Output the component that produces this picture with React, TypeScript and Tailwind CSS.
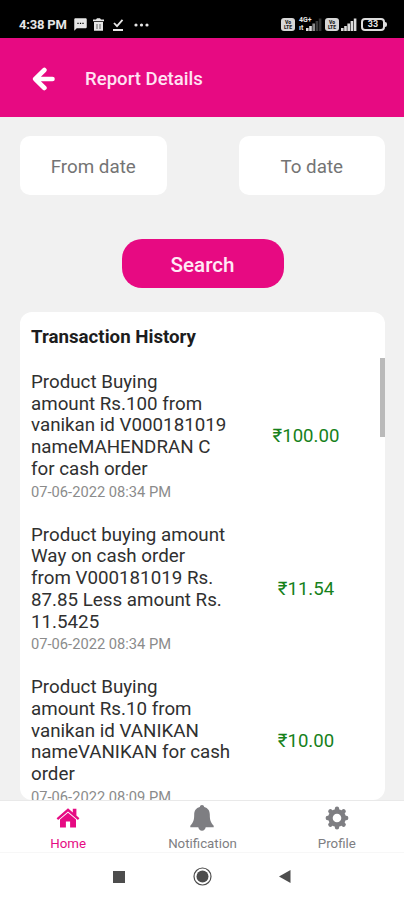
import { ReactNode } from 'react';
import { MdSms } from 'react-icons/md';

interface Transaction {
  lines: string[];
  date: string;
  amount: string;
}

const transactions: Transaction[] = [
  {
    lines: ['Product Buying', 'amount Rs.100 from', 'vanikan id V000181019', 'nameMAHENDRAN C', 'for cash order'],
    date: '07-06-2022 08:34 PM',
    amount: '₹100.00',
  },
  {
    lines: ['Product buying amount', 'Way on cash order', 'from V000181019 Rs.', '87.85 Less amount Rs.', '11.5425'],
    date: '07-06-2022 08:34 PM',
    amount: '₹11.54',
  },
  {
    lines: ['Product Buying', 'amount Rs.10 from', 'vanikan id VANIKAN', 'nameVANIKAN for cash', 'order'],
    date: '07-06-2022 08:09 PM',
    amount: '₹10.00',
  },
];

function BackIcon() {
  return (
    <svg
      className="mt-0.5 h-6 w-6"
      viewBox="0 0 24 24"
      fill="none"
      stroke="white"
      strokeWidth="4.6"
      strokeLinejoin="round"
      strokeLinecap="round"
    >
      <path d="M12.4 3L3.2 12l9.200 9M4 12h16.500" />
    </svg>
  );
}

function HomeIcon() {
  return (
    <svg className="h-5 w-6" viewBox="0 0 24 20" fill="currentColor">
      <path d="M12 .3L.6 10.200l1.500 1.700L12 3.400l9.900 8.500 1.500-1.700-3-2.600V.8h-3.600v3.700z" />
      <path d="M12 4.700l-8 6.900V19.500h5.900v-6h4.200v6H20v-7.900z" />
    </svg>
  );
}

function BellIcon() {
  return (
    <svg className="h-[26px] w-6" viewBox="0 0 24 26" fill="currentColor">
      <path d="M12 0c1.300 0 2 .8 2.200 2 3.900 1 5.600 4 5.600 7.500 0 5.300.7 7.800 3.900 11.200v1.500H.3v-1.500c3.200-3.400 3.900-5.900 3.900-11.200C4.200 6 5.900 3 9.800 2 10 .8 10.700 0 12 0z" />
      <path d="M8.200 21.500h7.600c-.2 2.600-1.700 4.200-3.800 4.200s-3.600-1.600-3.800-4.200z" />
    </svg>
  );
}

function GearIcon() {
  return (
    <svg className="h-6 w-6" viewBox="0 0 24 24" fill="none" stroke="currentColor">
      <circle cx="12" cy="12" r="6.600" strokeWidth="4.600" />
      <g strokeWidth="4.400" strokeLinecap="round">
        <path d="M12 2.800v2M12 19.200v2M2.800 12h2M19.200 12h2" />
        <path d="M5.400 5.400l1.500 1.500M17.100 17.100l1.500 1.500M5.400 18.600l1.500-1.500M17.100 6.900l1.500-1.500" />
      </g>
    </svg>
  );
}

function VolteBadge() {
  return (
    <div className="flex h-[13px] w-[14px] flex-col items-center justify-center rounded-[3px] bg-[#d6d6d6] text-[5px] leading-[5px] font-black text-[#222]">
      <span>Vo</span>
      <span>LTE</span>
    </div>
  );
}

function SignalBars({ weak = false }: { weak?: boolean }) {
  return (
    <svg className="h-[13px] w-4" viewBox="0 0 16 13" fill="#dcdcdc">
      <rect x="0" y="10" width="2.6" height="3" />
      <rect x="3.2" y="8" width="2.6" height="5" />
      <rect x="6.4" y="5.5" width="2.6" height="7.5" fill={weak ? '#8a8a8a' : undefined} />
      <rect x="9.6" y="3" width="2.6" height="10" fill={weak ? '#3a3a3a' : undefined} />
      <rect x="12.8" y="0.5" width="2.6" height="12.5" fill={weak ? '#333' : undefined} />
    </svg>
  );
}

function StatusBar() {
  return (
    <div className="flex h-[38px] shrink-0 items-start bg-black pt-[17px] pr-[17px] pl-[19px] text-[#e6e6e6]">
      <span className="w-[49px] text-[13px] leading-4 font-bold tracking-[-0.2px] whitespace-nowrap">4:38 PM</span>
      <MdSms className="ml-[5px] h-[15px] w-[15px]" />
      <svg className="mt-px ml-[5px] h-[13px] w-[11px]" viewBox="0 0 11 13" fill="currentColor">
        <path d="M0 1.500h3L4 .3h3l1 1.200h3v1.800H0zM1 4h9v8.700H1z" />
        <path d="M4 6v5M7 6v5" stroke="#555" strokeWidth=".9" />
      </svg>
      <svg className="mt-0.5 ml-2 h-3 w-3" viewBox="0 0 12 12" fill="none" stroke="currentColor" strokeWidth="1.8">
        <path d="M2 4l3 3.2L10.500 .8M1 11h10" />
      </svg>
      <svg className="mt-1.5 ml-2.5 h-1 w-[15px]" viewBox="0 0 15 4" fill="currentColor">
        <circle cx="2" cy="2" r="1.6" />
        <circle cx="7.500" cy="2" r="1.6" />
        <circle cx="13" cy="2" r="1.6" />
      </svg>
      <div className="ml-auto flex items-center pt-px">
        <VolteBadge />
        <div className="relative ml-1 flex w-[23px] justify-end">
          <SignalBars weak />
          <span className="absolute -top-0.5 left-0 text-[7px] leading-[8px] font-bold">4G+</span>
          <span className="absolute top-1.5 left-0 text-[7px] leading-[8px] font-bold">ıt</span>
        </div>
        <div className="w-[3px]" />
        <VolteBadge />
        <div className="w-0.5" />
        <SignalBars />
        <div className="ml-1 flex h-[13px] w-6 items-center justify-center rounded border-2 border-[#dcdcdc] text-[9px] leading-none font-bold">
          33
        </div>
        <div className="h-[5px] w-0.5 rounded-r bg-[#dcdcdc]" />
      </div>
    </div>
  );
}

function DateField({ placeholder }: { placeholder: string }) {
  return (
    <button className="h-[59px] w-[146.5px] rounded-[10px] bg-white pt-1 text-[18.8px] text-[#747474]">
      {placeholder}
    </button>
  );
}

function TransactionRow({ transaction }: { transaction: Transaction }) {
  return (
    <div className="flex h-[152.7px] shrink-0 items-start">
      <div className="w-[219px]">
        <div className="text-[18.75px] leading-[21.7px] whitespace-nowrap text-[#303030]">
          {transaction.lines.map((line) => (
            <div key={line}>{line}</div>
          ))}
        </div>
        <div className="text-[14.7px] leading-[22px] text-[#8b8b8b]">{transaction.date}</div>
      </div>
      <div className="mt-[53px] w-[112px] text-center text-[18.6px] leading-[22px] text-[#16811b]">
        {transaction.amount}
      </div>
    </div>
  );
}

interface TabItemProps {
  label: string;
  icon: ReactNode;
  active?: boolean;
}

function TabItem({ label, icon, active = false }: TabItemProps) {
  return (
    <button className={`flex flex-1 flex-col items-center ${active ? 'text-[#e60b83]' : 'text-[#7e7e82]'}`}>
      <span className="flex h-[33px] items-center justify-center">{icon}</span>
      <span className="pt-px text-[13.3px] leading-[17px]">{label}</span>
    </button>
  );
}

export default function App() {
  return (
    <div className="flex h-[900px] w-[404px] flex-col overflow-hidden bg-[#f1f1f1] font-[Roboto,sans-serif]">
      <StatusBar />

      {/* Header */}
      <header className="flex h-[79px] shrink-0 items-center bg-[#e70a82] pl-8 text-white">
        <BackIcon />
        <h1 className="ml-[29px] pt-[5px] text-[18.6px] font-medium text-[#ffe3f3]">Report Details</h1>
      </header>

      {/* Date filter */}
      <div className="flex shrink-0 justify-between pt-[19px] pr-[19px] pl-5">
        <DateField placeholder="From date" />
        <DateField placeholder="To date" />
      </div>
      <button className="mt-11 ml-[121.5px] h-[49px] w-[162px] shrink-0 rounded-[20px] bg-[#e70a82] pt-1 text-[20.6px] font-medium text-[#ffe9f5]">
        Search
      </button>

      {/* Transactions */}
      <section className="relative mt-6 mr-[19px] ml-5 flex min-h-0 flex-1 flex-col overflow-hidden rounded-xl bg-white pl-[11px]">
        <h2 className="mt-[13px] mb-[23px] shrink-0 text-[18.7px] leading-6 font-bold text-[#1d1d1d]">
          Transaction History
        </h2>
        {transactions.map((transaction, index) => (
          <TransactionRow key={index} transaction={transaction} />
        ))}
        <div className="absolute top-[46px] right-0 h-[79px] w-[5px] bg-[#bababa]" />
      </section>

      {/* Bottom tabs */}
      <nav className="flex h-[52px] shrink-0 border-t border-[#e9e9e9] bg-white pl-px">
        <TabItem label="Home" icon={<HomeIcon />} active />
        <TabItem label="Notification" icon={<BellIcon />} />
        <TabItem label="Profile" icon={<GearIcon />} />
      </nav>

      {/* System navigation */}
      <div className="flex h-12 shrink-0 items-center border-t border-[#f7f7f7] bg-white pl-[113px] text-[#4d4d4d]">
        <div className="h-3 w-3 bg-current" />
        <svg className="ml-[68px] h-[19px] w-[19px]" viewBox="0 0 19 19" fill="currentColor">
          <circle cx="9.500" cy="9.500" r="6" />
          <circle cx="9.500" cy="9.500" r="8.500" fill="none" stroke="currentColor" strokeWidth="1.200" />
        </svg>
        <svg className="ml-[67px] h-[13px] w-3" viewBox="0 0 12 13" fill="currentColor">
          <path d="M0 6.500L11.500 0v13z" />
        </svg>
      </div>
    </div>
  );
}
